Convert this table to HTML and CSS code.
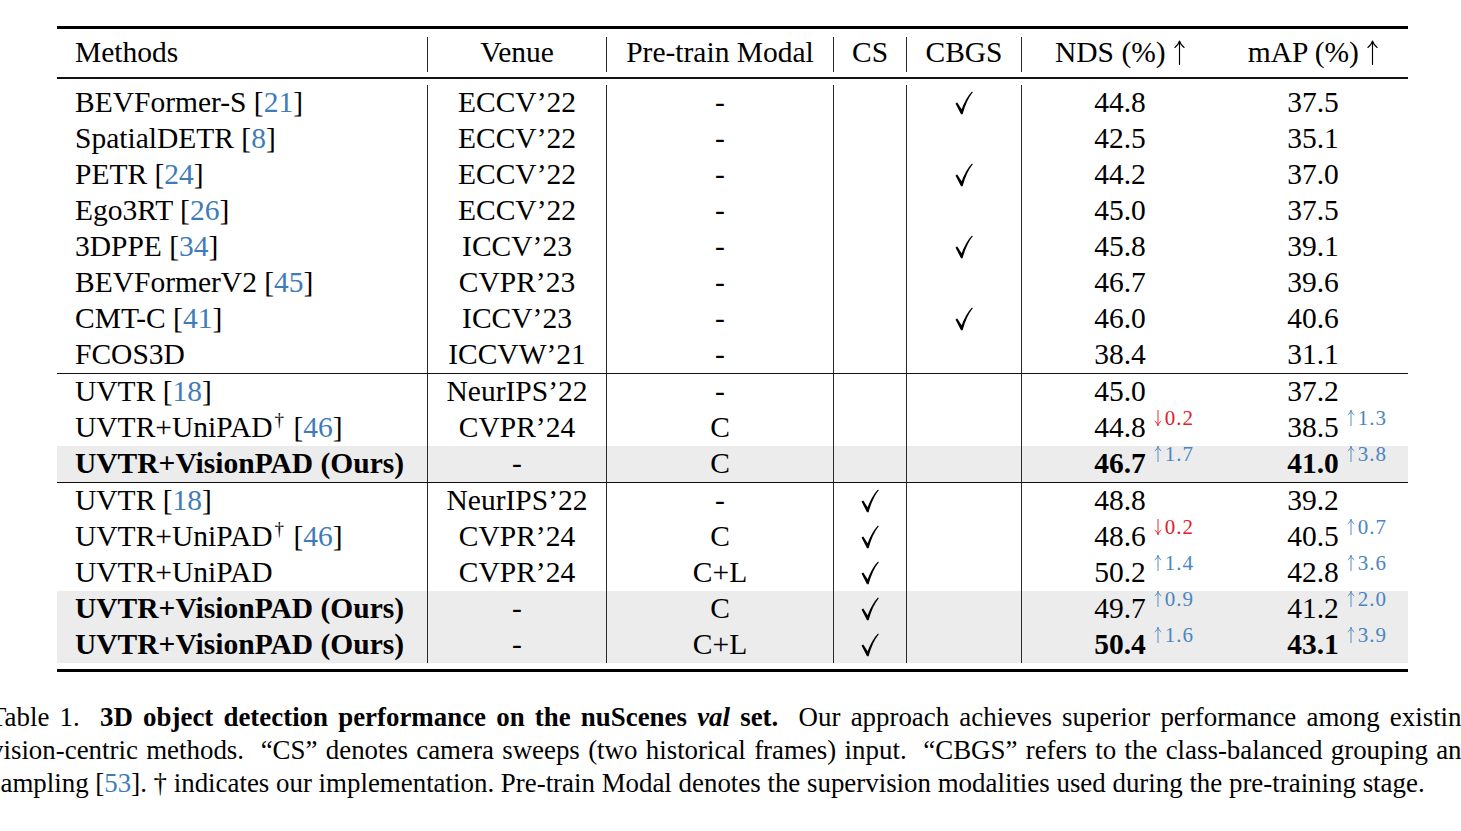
FILE: index.html
```html
<!DOCTYPE html>
<html lang="en">
<head>
<meta charset="utf-8">
<title>Table 1</title>
<link rel="stylesheet" href="styles.css">
</head>
<body>
<div class="table">
  <div class="thead">
    <div class="row">
      <div class="cell c-method">Methods</div>
      <div class="cell">Venue</div>
      <div class="cell">Pre-train Modal</div>
      <div class="cell">CS</div>
      <div class="cell">CBGS</div>
      <div class="cell">NDS (%)&nbsp;<svg class="arr head" viewBox="0 0 10 24"><path d="M5 1 V23.5 M5 1 C4.2 3.6 2.6 5.6 0.6 7.2 M5 1 C5.8 3.6 7.4 5.6 9.4 7.2"/></svg></div>
      <div class="cell c-map">mAP (%)&nbsp;<svg class="arr head" viewBox="0 0 10 24"><path d="M5 1 V23.5 M5 1 C4.2 3.6 2.6 5.6 0.6 7.2 M5 1 C5.8 3.6 7.4 5.6 9.4 7.2"/></svg></div>
    </div>
  </div>

  <div class="sec sec1">
    <div class="row">
      <div class="cell c-method">BEVFormer-S [<span class="ref">21</span>]</div>
      <div class="cell">ECCV’22</div><div class="cell">-</div><div class="cell"></div>
      <div class="cell"><svg class="check" viewBox="0 0 18 24" width="18" height="24"><path d="M0.5 12.6 L2.3 11.6 L6.6 18.2 C9.4 11 12.8 5 17 0.6 L17.8 1.3 C13.6 6.4 10.2 13.6 7.6 23.2 L6 23.2 Z"/></svg></div>
      <div class="cell c-nds"><span class="num">44.8</span></div>
      <div class="cell c-map"><span class="num">37.5</span></div>
    </div>
    <div class="row">
      <div class="cell c-method">SpatialDETR [<span class="ref">8</span>]</div>
      <div class="cell">ECCV’22</div><div class="cell">-</div><div class="cell"></div><div class="cell"></div>
      <div class="cell c-nds"><span class="num">42.5</span></div>
      <div class="cell c-map"><span class="num">35.1</span></div>
    </div>
    <div class="row">
      <div class="cell c-method">PETR [<span class="ref">24</span>]</div>
      <div class="cell">ECCV’22</div><div class="cell">-</div><div class="cell"></div>
      <div class="cell"><svg class="check" viewBox="0 0 18 24" width="18" height="24"><path d="M0.5 12.6 L2.3 11.6 L6.6 18.2 C9.4 11 12.8 5 17 0.6 L17.8 1.3 C13.6 6.4 10.2 13.6 7.6 23.2 L6 23.2 Z"/></svg></div>
      <div class="cell c-nds"><span class="num">44.2</span></div>
      <div class="cell c-map"><span class="num">37.0</span></div>
    </div>
    <div class="row">
      <div class="cell c-method">Ego3RT [<span class="ref">26</span>]</div>
      <div class="cell">ECCV’22</div><div class="cell">-</div><div class="cell"></div><div class="cell"></div>
      <div class="cell c-nds"><span class="num">45.0</span></div>
      <div class="cell c-map"><span class="num">37.5</span></div>
    </div>
    <div class="row">
      <div class="cell c-method">3DPPE [<span class="ref">34</span>]</div>
      <div class="cell">ICCV’23</div><div class="cell">-</div><div class="cell"></div>
      <div class="cell"><svg class="check" viewBox="0 0 18 24" width="18" height="24"><path d="M0.5 12.6 L2.3 11.6 L6.6 18.2 C9.4 11 12.8 5 17 0.6 L17.8 1.3 C13.6 6.4 10.2 13.6 7.6 23.2 L6 23.2 Z"/></svg></div>
      <div class="cell c-nds"><span class="num">45.8</span></div>
      <div class="cell c-map"><span class="num">39.1</span></div>
    </div>
    <div class="row">
      <div class="cell c-method">BEVFormerV2 [<span class="ref">45</span>]</div>
      <div class="cell">CVPR’23</div><div class="cell">-</div><div class="cell"></div><div class="cell"></div>
      <div class="cell c-nds"><span class="num">46.7</span></div>
      <div class="cell c-map"><span class="num">39.6</span></div>
    </div>
    <div class="row">
      <div class="cell c-method">CMT-C [<span class="ref">41</span>]</div>
      <div class="cell">ICCV’23</div><div class="cell">-</div><div class="cell"></div>
      <div class="cell"><svg class="check" viewBox="0 0 18 24" width="18" height="24"><path d="M0.5 12.6 L2.3 11.6 L6.6 18.2 C9.4 11 12.8 5 17 0.6 L17.8 1.3 C13.6 6.4 10.2 13.6 7.6 23.2 L6 23.2 Z"/></svg></div>
      <div class="cell c-nds"><span class="num">46.0</span></div>
      <div class="cell c-map"><span class="num">40.6</span></div>
    </div>
    <div class="row">
      <div class="cell c-method">FCOS3D</div>
      <div class="cell">ICCVW’21</div><div class="cell">-</div><div class="cell"></div><div class="cell"></div>
      <div class="cell c-nds"><span class="num">38.4</span></div>
      <div class="cell c-map"><span class="num">31.1</span></div>
    </div>
  </div>

  <div class="sec sec2">
    <div class="row">
      <div class="cell c-method">UVTR [<span class="ref">18</span>]</div>
      <div class="cell">NeurIPS’22</div><div class="cell">-</div><div class="cell"></div><div class="cell"></div>
      <div class="cell c-nds"><span class="num">45.0</span></div>
      <div class="cell c-map"><span class="num">37.2</span></div>
    </div>
    <div class="row">
      <div class="cell c-method">UVTR+UniPAD<sup class="dag">†</sup>&nbsp;[<span class="ref">46</span>]</div>
      <div class="cell">CVPR’24</div><div class="cell">C</div><div class="cell"></div><div class="cell"></div>
      <div class="cell c-nds"><span class="num">44.8<span class="delta down"><span><svg class="arr small" viewBox="0 0 10 24"><path d="M5 23 V0.5 M5 23 C4.2 20.4 2.6 18.4 0.6 16.8 M5 23 C5.8 20.4 7.4 18.4 9.4 16.8"/></svg>0.2</span></span></span></div>
      <div class="cell c-map"><span class="num">38.5<span class="delta up"><span><svg class="arr small" viewBox="0 0 10 24"><path d="M5 1 V23.5 M5 1 C4.2 3.6 2.6 5.6 0.6 7.2 M5 1 C5.8 3.6 7.4 5.6 9.4 7.2"/></svg>1.3</span></span></span></div>
    </div>
    <div class="row ours">
      <div class="cell c-method"><b>UVTR+VisionPAD (Ours)</b></div>
      <div class="cell">-</div><div class="cell">C</div><div class="cell"></div><div class="cell"></div>
      <div class="cell c-nds"><span class="num"><b>46.7</b><span class="delta up"><span><svg class="arr small" viewBox="0 0 10 24"><path d="M5 1 V23.5 M5 1 C4.2 3.6 2.6 5.6 0.6 7.2 M5 1 C5.8 3.6 7.4 5.6 9.4 7.2"/></svg>1.7</span></span></span></div>
      <div class="cell c-map"><span class="num"><b>41.0</b><span class="delta up"><span><svg class="arr small" viewBox="0 0 10 24"><path d="M5 1 V23.5 M5 1 C4.2 3.6 2.6 5.6 0.6 7.2 M5 1 C5.8 3.6 7.4 5.6 9.4 7.2"/></svg>3.8</span></span></span></div>
    </div>
  </div>

  <div class="sec sec3">
    <div class="row">
      <div class="cell c-method">UVTR [<span class="ref">18</span>]</div>
      <div class="cell">NeurIPS’22</div><div class="cell">-</div>
      <div class="cell"><svg class="check" viewBox="0 0 18 24" width="18" height="24"><path d="M0.5 12.6 L2.3 11.6 L6.6 18.2 C9.4 11 12.8 5 17 0.6 L17.8 1.3 C13.6 6.4 10.2 13.6 7.6 23.2 L6 23.2 Z"/></svg></div>
      <div class="cell"></div>
      <div class="cell c-nds"><span class="num">48.8</span></div>
      <div class="cell c-map"><span class="num">39.2</span></div>
    </div>
    <div class="row">
      <div class="cell c-method">UVTR+UniPAD<sup class="dag">†</sup>&nbsp;[<span class="ref">46</span>]</div>
      <div class="cell">CVPR’24</div><div class="cell">C</div>
      <div class="cell"><svg class="check" viewBox="0 0 18 24" width="18" height="24"><path d="M0.5 12.6 L2.3 11.6 L6.6 18.2 C9.4 11 12.8 5 17 0.6 L17.8 1.3 C13.6 6.4 10.2 13.6 7.6 23.2 L6 23.2 Z"/></svg></div>
      <div class="cell"></div>
      <div class="cell c-nds"><span class="num">48.6<span class="delta down"><span><svg class="arr small" viewBox="0 0 10 24"><path d="M5 23 V0.5 M5 23 C4.2 20.4 2.6 18.4 0.6 16.8 M5 23 C5.8 20.4 7.4 18.4 9.4 16.8"/></svg>0.2</span></span></span></div>
      <div class="cell c-map"><span class="num">40.5<span class="delta up"><span><svg class="arr small" viewBox="0 0 10 24"><path d="M5 1 V23.5 M5 1 C4.2 3.6 2.6 5.6 0.6 7.2 M5 1 C5.8 3.6 7.4 5.6 9.4 7.2"/></svg>0.7</span></span></span></div>
    </div>
    <div class="row">
      <div class="cell c-method">UVTR+UniPAD</div>
      <div class="cell">CVPR’24</div><div class="cell">C+L</div>
      <div class="cell"><svg class="check" viewBox="0 0 18 24" width="18" height="24"><path d="M0.5 12.6 L2.3 11.6 L6.6 18.2 C9.4 11 12.8 5 17 0.6 L17.8 1.3 C13.6 6.4 10.2 13.6 7.6 23.2 L6 23.2 Z"/></svg></div>
      <div class="cell"></div>
      <div class="cell c-nds"><span class="num">50.2<span class="delta up"><span><svg class="arr small" viewBox="0 0 10 24"><path d="M5 1 V23.5 M5 1 C4.2 3.6 2.6 5.6 0.6 7.2 M5 1 C5.8 3.6 7.4 5.6 9.4 7.2"/></svg>1.4</span></span></span></div>
      <div class="cell c-map"><span class="num">42.8<span class="delta up"><span><svg class="arr small" viewBox="0 0 10 24"><path d="M5 1 V23.5 M5 1 C4.2 3.6 2.6 5.6 0.6 7.2 M5 1 C5.8 3.6 7.4 5.6 9.4 7.2"/></svg>3.6</span></span></span></div>
    </div>
    <div class="row ours">
      <div class="cell c-method"><b>UVTR+VisionPAD (Ours)</b></div>
      <div class="cell">-</div><div class="cell">C</div>
      <div class="cell"><svg class="check" viewBox="0 0 18 24" width="18" height="24"><path d="M0.5 12.6 L2.3 11.6 L6.6 18.2 C9.4 11 12.8 5 17 0.6 L17.8 1.3 C13.6 6.4 10.2 13.6 7.6 23.2 L6 23.2 Z"/></svg></div>
      <div class="cell"></div>
      <div class="cell c-nds"><span class="num">49.7<span class="delta up"><span><svg class="arr small" viewBox="0 0 10 24"><path d="M5 1 V23.5 M5 1 C4.2 3.6 2.6 5.6 0.6 7.2 M5 1 C5.8 3.6 7.4 5.6 9.4 7.2"/></svg>0.9</span></span></span></div>
      <div class="cell c-map"><span class="num">41.2<span class="delta up"><span><svg class="arr small" viewBox="0 0 10 24"><path d="M5 1 V23.5 M5 1 C4.2 3.6 2.6 5.6 0.6 7.2 M5 1 C5.8 3.6 7.4 5.6 9.4 7.2"/></svg>2.0</span></span></span></div>
    </div>
    <div class="row ours">
      <div class="cell c-method"><b>UVTR+VisionPAD (Ours)</b></div>
      <div class="cell">-</div><div class="cell">C+L</div>
      <div class="cell"><svg class="check" viewBox="0 0 18 24" width="18" height="24"><path d="M0.5 12.6 L2.3 11.6 L6.6 18.2 C9.4 11 12.8 5 17 0.6 L17.8 1.3 C13.6 6.4 10.2 13.6 7.6 23.2 L6 23.2 Z"/></svg></div>
      <div class="cell"></div>
      <div class="cell c-nds"><span class="num"><b>50.4</b><span class="delta up"><span><svg class="arr small" viewBox="0 0 10 24"><path d="M5 1 V23.5 M5 1 C4.2 3.6 2.6 5.6 0.6 7.2 M5 1 C5.8 3.6 7.4 5.6 9.4 7.2"/></svg>1.6</span></span></span></div>
      <div class="cell c-map"><span class="num"><b>43.1</b><span class="delta up"><span><svg class="arr small" viewBox="0 0 10 24"><path d="M5 1 V23.5 M5 1 C4.2 3.6 2.6 5.6 0.6 7.2 M5 1 C5.8 3.6 7.4 5.6 9.4 7.2"/></svg>3.9</span></span></span></div>
    </div>
  </div>
</div>

<div class="caption">
  <span class="cap-line">Table 1.&nbsp; <b>3D object detection performance on the nuScenes <i>val</i> set.</b>&nbsp; Our approach achieves superior performance among existing</span>
  <span class="cap-line">vision-centric methods. &nbsp;“CS” denotes camera sweeps (two historical frames) input. &nbsp;“CBGS” refers to the class-balanced grouping and</span>
  <span class="cap-line last">sampling [<span class="ref">53</span>]. † indicates our implementation. Pre-train Modal denotes the supervision modalities used during the pre-training stage.</span>
</div>
</body>
</html>
```

FILE: styles.css
```css
html, body {
  margin: 0;
  padding: 0;
  background: #ffffff;
  overflow: hidden;
}

body {
  width: 1461px;
  height: 831px;
  font-family: "Liberation Serif", "Times New Roman", "DejaVu Serif", serif;
  color: #000;
}

.table {
  margin: 26px 0 0 57px;
  width: 1351px;
  border-top: 3px solid #000;
  border-bottom: 3px solid #000;
  font-size: 29.5px;
}

.thead {
  padding: 8px 0 5px;
  border-bottom: 2px solid #111;
}

.row {
  display: grid;
  grid-template-columns: 370px 179px 227px 73px 115px 197px 190px;
  height: 36px;
}

.thead .row {
  height: 35px;
}

.thead .cell {
  padding-bottom: 4px;
}

.cell {
  display: flex;
  align-items: center;
  justify-content: center;
  white-space: nowrap;
  line-height: 1;
}

.cell + .cell {
  border-left: 1px solid #2a2a2a;
}

.cell.c-map {
  border-left: none;
}

.c-method {
  justify-content: flex-start;
  padding-left: 18px;
}

.sec1 {
  padding-top: 6px;
}

.sec2 {
  border-top: 1px solid #111;
}

.sec3 {
  border-top: 1px solid #111;
  padding-bottom: 6px;
}

.row.ours {
  background: #ececec;
}

.ref {
  color: #3e7cb8;
}

.dag {
  display: inline-block;
  font-size: 19px;
  line-height: 1;
  transform: translateY(-9px);
  margin: 0 2px 0 2px;
}

.num {
  display: inline-block;
}

.arr {
  fill: none;
  stroke: currentColor;
  stroke-width: 1.2;
  stroke-linecap: round;
}

.arr.head {
  width: 11px;
  height: 25px;
  margin-left: 1px;
  stroke-width: 1.1;
}

.arr.small {
  width: 8px;
  height: 16px;
  margin-right: 3px;
  vertical-align: -1px;
  stroke-width: 1.4;
}

.delta {
  display: inline-block;
  width: 0;
  white-space: nowrap;
  font-size: 21px;
  line-height: 1;
  transform: translateY(-12px);
}

.delta > span {
  display: inline-block;
  margin-left: 8px;
  letter-spacing: 1px;
}

.delta.up {
  color: #4a86c0;
}

.delta.down {
  color: #e0202a;
}

.check {
  display: block;
  fill: #000;
}

.caption {
  margin: 29px 0 0 -10px;
  width: 1485px;
  font-size: 26.9px;
  line-height: 33px;
}

.cap-line {
  display: block;
  text-align: justify;
  text-align-last: justify;
  white-space: nowrap;
}

.cap-line.last {
  text-align-last: left;
}
```
